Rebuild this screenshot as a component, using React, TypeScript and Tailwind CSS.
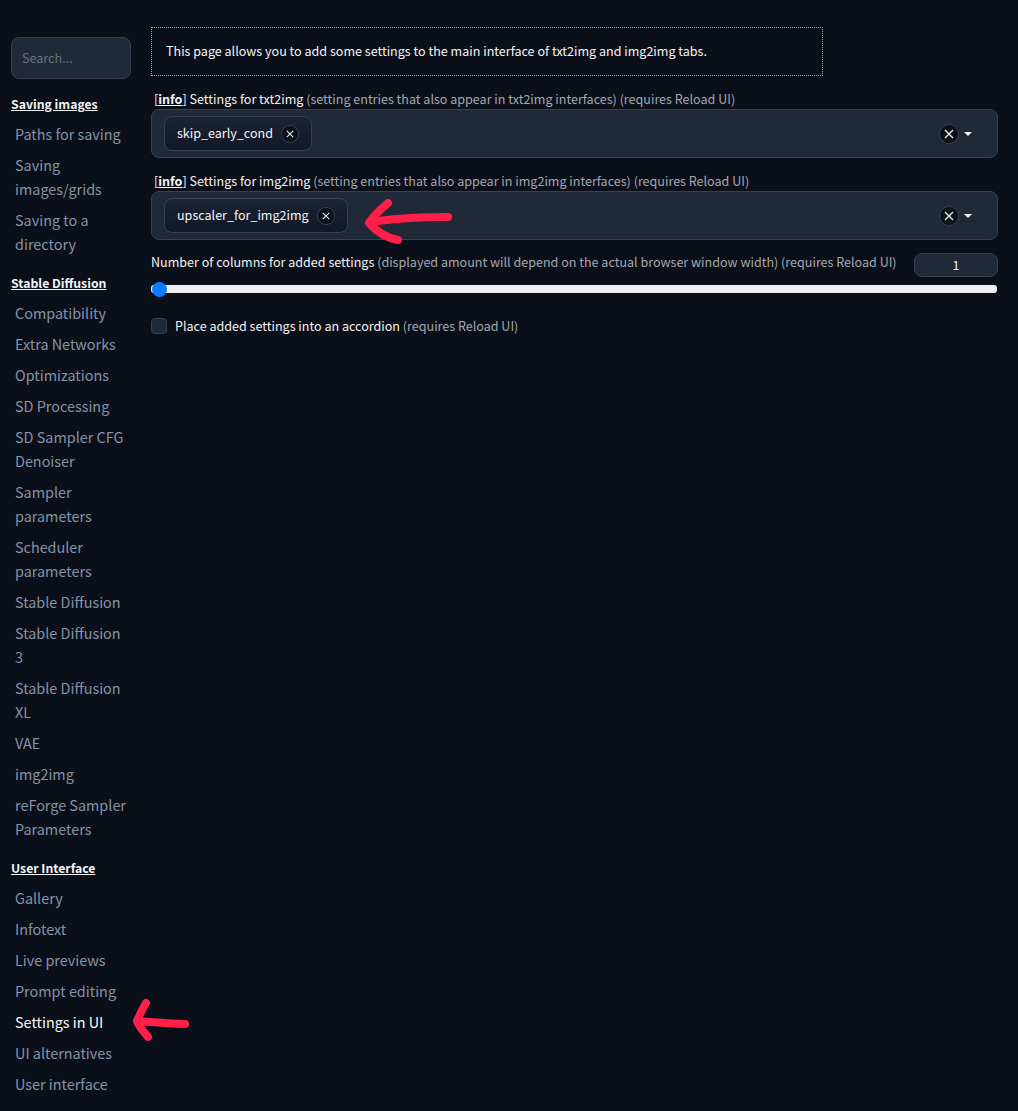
const font = { fontFamily: '"Noto Sans CJK JP", "Noto Sans", sans-serif' };

type NavGroup = { title: string; items: string[] };

const groups: NavGroup[] = [
  { title: 'Saving images', items: ['Paths for saving', 'Saving images/grids', 'Saving to a directory'] },
  {
    title: 'Stable Diffusion',
    items: [
      'Compatibility',
      'Extra Networks',
      'Optimizations',
      'SD Processing',
      'SD Sampler CFG Denoiser',
      'Sampler parameters',
      'Scheduler parameters',
      'Stable Diffusion',
      'Stable Diffusion 3',
      'Stable Diffusion XL',
      'VAE',
      'img2img',
      'reForge Sampler Parameters',
    ],
  },
  {
    title: 'User Interface',
    items: ['Gallery', 'Infotext', 'Live previews', 'Prompt editing', 'Settings in UI', 'UI alternatives', 'User interface'],
  },
];

const CloseDot = ({ size }: { size: 'sm' | 'lg' }) => (
  <span
    className={
      size === 'sm'
        ? 'flex h-[18px] w-[18px] items-center justify-center rounded-full border border-[#374151] bg-[#0b0f19]'
        : 'flex h-5 w-5 items-center justify-center rounded-full border border-[#374151] bg-[#0b0f19]'
    }
  >
    <svg viewBox="0 0 10 10" className={size === 'sm' ? 'h-2 w-2' : 'h-2.5 w-2.5'} fill="none" stroke="#f3f4f6" strokeWidth="1.3">
      <path d="M1 1 L9 9 M9 1 L1 9" />
    </svg>
  </span>
);

const MultiSelect = ({ info, rest, chip }: { info: string; rest: string; chip: string }) => (
  <div className="mb-[13px]">
    <div className="h-[20px] pl-[3px] text-[12.55px] leading-[20px] text-[#f3f4f6]">
      [<span className="font-bold underline">info</span>] {info} <span className="text-[#a3a8b0]">{rest}</span>
    </div>
    <div className="flex h-[49px] items-center justify-between rounded-lg border border-[#374151] bg-[#1f2937] pl-3 pr-[25px]">
      <div className="flex h-[35px] items-center gap-2 rounded-lg border border-[#374151] bg-gradient-to-b from-[#1b2433] to-[#111827] pl-3 pr-[12px] text-[12.55px] text-[#f3f4f6]">
        {chip}
        <CloseDot size="sm" />
      </div>
      <div className="flex items-center gap-[5px]">
        <CloseDot size="lg" />
        <span className="h-0 w-0 border-x-[4px] border-t-[4px] border-x-transparent border-t-[#f3f4f6]" />
      </div>
    </div>
  </div>
);

export default function App() {
  return (
    <div className="relative flex min-h-screen overflow-hidden bg-[#0b0f19]" style={font}>
      <aside className="w-[151px] shrink-0 pl-[11px] pr-5 pt-[37px]">
        <input
          placeholder="Search..."
          className="mb-[13px] h-[42px] w-[120px] rounded-lg border border-[#374151] bg-[#1f2937] px-[10px] pb-[2px] text-[12.6px] text-white placeholder:text-[#6b7280]"
        />
        {groups.map((g) => (
          <div key={g.title} className="mb-[12px]">
            <div className="mb-[2px] h-6 text-[12.25px] font-bold leading-6 text-[#f3f4f6] underline">{g.title}</div>
            {g.items.map((item) => (
              <div
                key={g.title + item}
                className={
                  item === 'Settings in UI'
                    ? 'py-[3.5px] pl-1 text-[14.4px] leading-6 text-[#f9fafb]'
                    : 'py-[3.5px] pl-1 text-[14.4px] leading-6 text-[#8494a8]'
                }
              >
                {item}
              </div>
            ))}
          </div>
        ))}
      </aside>

      <main className="w-[847px] pt-[27px]">
        <div className="mb-[13px] flex h-[49px] w-[672px] items-center border border-dotted border-[#9ca3af] pl-[14px] text-[12.55px] text-[#f3f4f6]">
          This page allows you to add some settings to the main interface of txt2img and img2img tabs.
        </div>
        <MultiSelect
          info="Settings for txt2img"
          rest="(setting entries that also appear in txt2img interfaces) (requires Reload UI)"
          chip="skip_early_cond"
        />
        <MultiSelect
          info="Settings for img2img"
          rest="(setting entries that also appear in img2img interfaces) (requires Reload UI)"
          chip="upscaler_for_img2img"
        />
        <div className="flex h-6 items-start justify-between">
          <div className="-mt-px text-[12.55px] leading-5 text-[#f3f4f6]">
            Number of columns for added settings{' '}
            <span className="text-[#a3a8b0]">(displayed amount will depend on the actual browser window width) (requires Reload UI)</span>
          </div>
          <div className="flex h-6 w-[84px] items-center justify-center rounded-lg border border-[#374151] bg-[#1f2937] text-[12.55px] text-[#f3f4f6]">
            1
          </div>
        </div>
        <div className="relative mt-2 h-2 w-[846px] rounded-[3px] bg-[#efefef]">
          <span className="absolute left-px top-[-3px] h-[15px] w-[15px] rounded-full bg-[#0a7cff]" />
        </div>
        <div className="mt-[24px] flex items-center gap-2 text-[12.55px] text-[#f3f4f6]">
          <span className="h-4 w-4 rounded border border-[#374151] bg-[#1f2937]" />
          <span>
            Place added settings into an accordion <span className="text-[#a3a8b0]">(requires Reload UI)</span>
          </span>
        </div>
      </main>

      <svg className="pointer-events-none absolute left-0 top-0" width="1018" height="1111" fill="none" stroke="#ff1f47" strokeLinecap="round" strokeLinejoin="round">
        <path strokeWidth="8" d="M448 217 C430 217 400 218 378 221 L369 223 C373 216 381 209 388 203 M369 223 C376 231 387 238 398 240" />
        <path strokeWidth="8" d="M185 1024 C170 1024 152 1022 137 1021 C140 1014 143 1008 146 1003 M137 1021 C139 1027 144 1032 148 1037" />
      </svg>
    </div>
  );
}
